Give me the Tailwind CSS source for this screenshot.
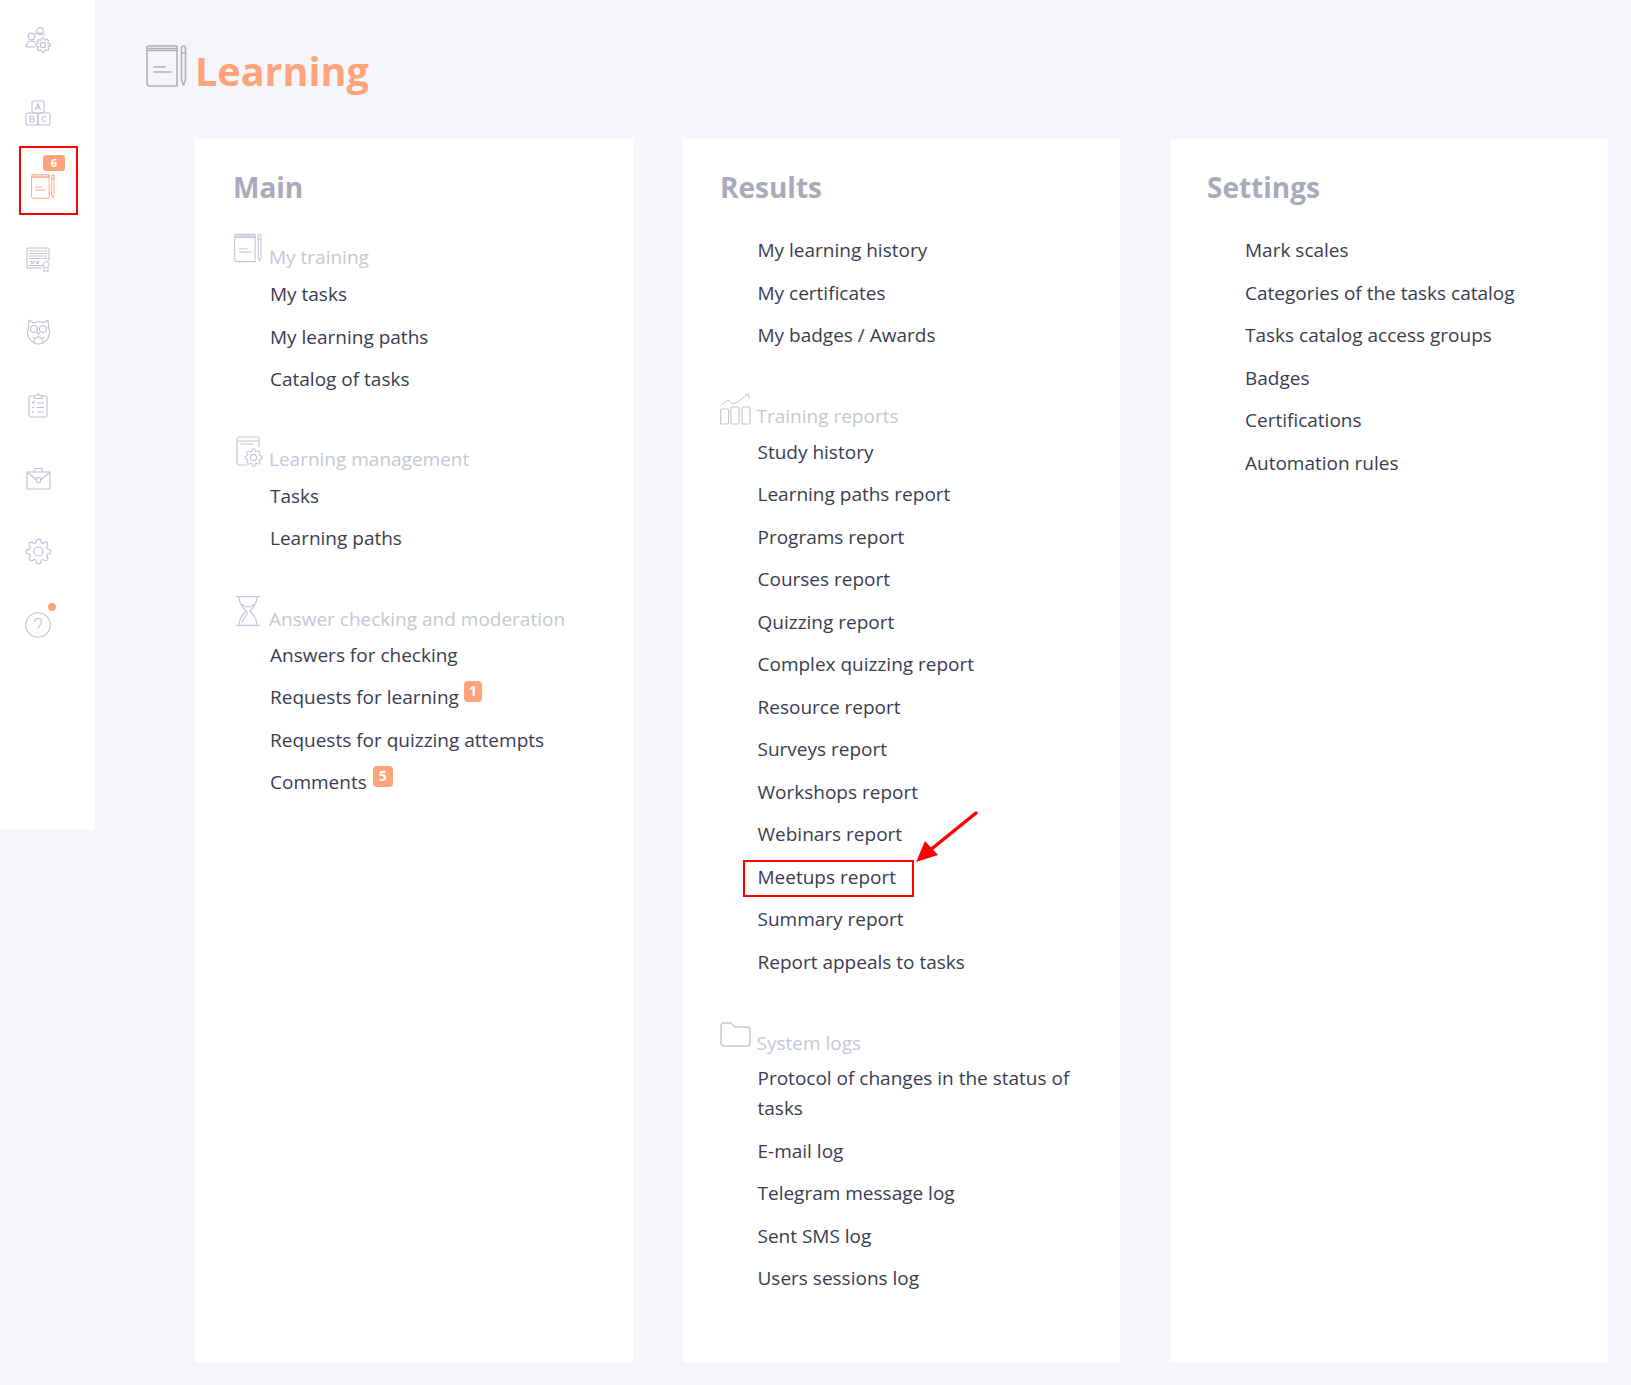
<!DOCTYPE html>
<html lang="en"><head><meta charset="utf-8"><title>Learning</title>
<script src="https://cdn.jsdelivr.net/npm/@tailwindcss/browser@4"></script></head>
<body class="bg-[#f5f6fb]">
<svg class="hidden" width="0" height="0">
<symbol id="book" viewBox="0 0 41 42"><g fill="none" stroke="currentColor" stroke-width="1.6" stroke-linecap="round" stroke-linejoin="round"><path d="M3 1h28v40H4a3 3 0 0 1-3-3V3a2 2 0 0 1 2-2z"/><path d="M1.500 5.500h29.500M3 3.500h28M8 22h11M8 27h17"/><path d="M35.500 3a2 2 0 0 1 4 0v32l-2 5-2-5zM35.500 8h4"/></g></symbol>
<symbol id="gear" viewBox="0 0 24 24"><g fill="none" stroke="currentColor" stroke-width="1.100"><circle cx="12" cy="12" r="4" vector-effect="non-scaling-stroke"/><path vector-effect="non-scaling-stroke" d="M19.400 15a1.650 1.650 0 0 0 .33 1.820l.06.06a2 2 0 0 1 0 2.830 2 2 0 0 1-2.830 0l-.06-.06a1.650 1.650 0 0 0-1.820-.33 1.650 1.650 0 0 0-1 1.510V21a2 2 0 0 1-2 2 2 2 0 0 1-2-2v-.09A1.650 1.650 0 0 0 9 19.400a1.650 1.650 0 0 0-1.820.33l-.06.06a2 2 0 0 1-2.830 0 2 2 0 0 1 0-2.830l.06-.06a1.650 1.650 0 0 0 .33-1.820 1.650 1.650 0 0 0-1.510-1H3a2 2 0 0 1-2-2 2 2 0 0 1 2-2h.09A1.650 1.650 0 0 0 4.600 9a1.650 1.650 0 0 0-.33-1.820l-.06-.06a2 2 0 0 1 0-2.830 2 2 0 0 1 2.830 0l.06.06a1.650 1.650 0 0 0 1.820.33H9a1.650 1.650 0 0 0 1-1.510V3a2 2 0 0 1 2-2 2 2 0 0 1 2 2v.09a1.650 1.650 0 0 0 1 1.510 1.650 1.650 0 0 0 1.820-.33l.06-.06a2 2 0 0 1 2.830 0 2 2 0 0 1 0 2.830l-.06.06a1.650 1.650 0 0 0-.33 1.820V9a1.650 1.650 0 0 0 1.510 1H21a2 2 0 0 1 2 2 2 2 0 0 1-2 2h-.09a1.650 1.650 0 0 0-1.510 1z"/></g></symbol>
</svg>
<div class="flex w-[1631px] h-[1385px] overflow-hidden font-['Open_Sans',sans-serif]">
<aside class="w-[95px] h-[830px] bg-white shrink-0 pt-[3px]">
  <div class="w-[76px] flex flex-col items-center text-[#bfc0d4]">
    <div class="h-[73.2px] flex items-center justify-center">
      <svg class="w-[26px] h-[26px]" viewBox="0 0 26 26" fill="none" stroke="currentColor" stroke-width="1.200"><circle cx="15" cy="4" r="3.300"/><circle cx="6.500" cy="9.500" r="3.300"/><path d="M1 20c0-3.500 2.500-6 5.500-6 1.500 0 3 .6 4 1.500M10 7c1-.5 2-1 5-1 2 0 4 1 5 2.500M1 20h9"/><use href="#gear" x="10" y="10" width="16" height="16"/></svg>
    </div>
    <div class="h-[73.2px] flex items-center justify-center">
      <svg class="w-[26px] h-[26px]" viewBox="0 0 26 26" fill="none" stroke="currentColor" stroke-width="1.100"><rect x="7" y="1" width="12" height="12" rx="2"/><rect x="1" y="13" width="12" height="12" rx="2"/><rect x="13" y="13" width="12" height="12" rx="2"/><path d="M10.500 10l2.500-6 2.500 6M11.500 8h3M5 16h2.500a1.500 1.500 0 0 1 0 3H5zm0 3h3a1.500 1.500 0 0 1 0 3H5zM21 17a2.500 2.500 0 1 0 0 4"/></svg>
    </div>
    <div class="relative h-[73.2px] w-full flex items-center justify-center">
      <svg class="w-[24px] h-[25px] text-[#ffa47a] ml-[9px] mt-[2px]"><use href="#book"/></svg>
      <div class="absolute left-[19px] top-[-3px] w-[59px] h-[69px] border-[2px] border-[#ff0000]"><span class="absolute left-[22px] top-[7px] w-[22px] h-[16px] rounded-[3px] bg-[#ffa47a] text-white text-[11px] leading-[16px] font-bold text-center">6</span></div>
    </div>
    <div class="h-[73.2px] flex items-center justify-center">
      <svg class="w-[25px] h-[25px]" viewBox="0 0 25 25" fill="none" stroke="currentColor" stroke-width="1"><path d="M16 21H1V1h22v13"/><path d="M3 4h18M3 6.500h18M3 9h18M3 11.500h18" stroke-width=".9"/><path d="M5 14l1.500 1.200 1.500-1.200-.5 2.500h-2zM10 14l1.500 1.200 1.500-1.200-.5 2.500h-2zM3 18.500h14"/><circle cx="20" cy="17.500" r="3"/><path d="M18 20.500V25l2-1.500 2 1.500v-4.500"/></svg>
    </div>
    <div class="h-[73.2px] flex items-center justify-center">
      <svg class="w-[25px] h-[26px]" viewBox="0 0 25 26" fill="none" stroke="currentColor" stroke-width="1.100"><path d="M3 1l4.500 3a11 11 0 0 1 10 0L22 1l.5 8c2 4 1 9-2 12-2 2.500-5 4-8 4s-6-1.500-8-4C1.500 18 .5 13 2.500 9z"/><circle cx="8" cy="10" r="3.500"/><circle cx="17" cy="10" r="3.500"/><path d="M11 13l1.500 2.500L14 13M7 18l2 2 3.500-2.500 3.500 2.500 2-2M8 24v-3M17 24v-3"/></svg>
    </div>
    <div class="h-[73.2px] flex items-center justify-center">
      <svg class="w-[20px] h-[25px]" viewBox="0 0 20 25" fill="none" stroke="currentColor" stroke-width="1.100"><path d="M6 3H2.500A1.500 1.500 0 0 0 1 4.500v18A1.500 1.500 0 0 0 2.500 24h15a1.500 1.500 0 0 0 1.500-1.500v-18A1.500 1.500 0 0 0 17.500 3H14"/><path d="M6 5.500V3l2-.5L10 1l2 1.500 2 .5v2.500zM4 9l1 1 2-2M9 10h7M9 14.500h7M9 19h7M4 14.500h2M4 19h2"/></svg>
    </div>
    <div class="h-[73.2px] flex items-center justify-center">
      <svg class="w-[25px] h-[23px]" viewBox="0 0 25 23" fill="none" stroke="currentColor" stroke-width="1.100"><path d="M1 5h23v17H1zM9 5V1.500h7V5"/><path d="M1 5l9.500 8M24 5l-9.500 8"/><rect x="10.500" y="10.500" width="4" height="5" rx="1"/></svg>
    </div>
    <div class="h-[73.2px] flex items-center justify-center">
      <svg class="w-[27px] h-[27px]"><use href="#gear"/></svg>
    </div>
    <div class="relative h-[73.2px] flex items-center justify-center">
      <svg class="w-[26px] h-[26px]" viewBox="0 0 26 26" fill="none" stroke="currentColor" stroke-width="1.100"><circle cx="13" cy="13" r="12.300"/><path d="M10 10c0-2 1.300-3.500 3.200-3.500S16.500 8 16.500 10c0 2.500-3.200 3.500-3.200 6.500M13.300 19.500v1"/></svg>
      <span class="absolute left-[23px] top-[14px] w-[8px] h-[8px] rounded-full bg-[#ffa47a]"></span>
    </div>
  </div>
</aside>
<main class="relative flex-1">
  <header class="h-[139px] pt-[45px] pl-[51px] flex items-start">
    <svg class="w-[41px] h-[42px] text-[#b1b2b8] shrink-0"><use href="#book"/></svg>
    <h1 class="ml-[8px] mt-[-4px] text-[39.500px] leading-[60px] font-bold text-[#ffa47a]">Learning</h1>
  </header>
  <div class="ml-[100px] flex gap-[50px] text-[19px] leading-[30px] text-[#3a3d50]">
    <section class="w-[438px] h-[1223px] bg-white pl-[38px] pt-[27px]">
      <h2 class="text-[28px] leading-[42px] font-bold text-[#a9aabb]">Main</h2>
      <div class="mt-[18px] mb-[33px] pl-[1px]">
        <div class="flex items-end h-[46px] text-[#c5c6d8]"><svg class="w-[28px] h-[30px] mb-[9px] mr-[7px]"><use href="#book"/></svg><span>My training</span></div>
        <a class="block pl-[36px] py-[6.250px] mt-[1px]">My tasks</a>
        <a class="block pl-[36px] py-[6.250px]">My learning paths</a>
        <a class="block pl-[36px] py-[6.250px]">Catalog of tasks</a>
      </div>
      <div class="mb-[34px] pl-[1px]">
        <div class="flex items-end h-[40px] text-[#c5c6d8]"><svg class="w-[27px] h-[31px] mb-[7px] mr-[6px] ml-[2px]" viewBox="0 0 27 31" fill="none" stroke="currentColor" stroke-width="1.200"><path d="M11 29H3a2 2 0 0 1-2-2V3a2 2 0 0 1 2-2h19a1 1 0 0 1 1 1v9M1 5h22M4 8h13"/><use href="#gear" x="8" y="12" width="19" height="19"/></svg><span>Learning management</span></div>
        <a class="block pl-[36px] py-[6.250px] mt-[1px]">Tasks</a>
        <a class="block pl-[36px] py-[6.250px]">Learning paths</a>
      </div>
      <div class="pl-[1px]">
        <div class="flex items-end h-[40px] text-[#c5c6d8]"><svg class="w-[24px] h-[30px] mb-[8px] mr-[9px] ml-[2px]" viewBox="0 0 24 30" fill="none" stroke="currentColor" stroke-width="1.200"><path d="M0 .6h24M0 29.400h24M3 1c0 6 3 10 7 14-4 4-7 8-7 14M21 1c0 6-3 10-7 14 4 4 7 8 7 14M6 8c3 4 9 4 12 0M6 27c1-5 5-7 6-12"/></svg><span>Answer checking and moderation</span></div>
        <a class="block pl-[36px] py-[6.250px]">Answers for checking</a>
        <a class="flex items-start pl-[36px] py-[6.250px]">Requests for learning<span class="ml-[5px] mt-[-1px] w-[18px] h-[21px] rounded-[4px] bg-[#ffa47a] text-white text-[14px] leading-[19px] font-bold text-center">1</span></a>
        <a class="block pl-[36px] py-[6.250px]">Requests for quizzing attempts</a>
        <a class="flex items-start pl-[36px] py-[6.250px]">Comments<span class="ml-[6px] mt-[-1px] w-[20px] h-[21px] rounded-[4px] bg-[#ffa47a] text-white text-[14px] leading-[19px] font-bold text-center">5</span></a>
      </div>
    </section>
    <section class="w-[437px] h-[1223px] bg-white pl-[37px] pt-[27px]">
      <h2 class="text-[28px] leading-[42px] font-bold text-[#a9aabb]">Results</h2>
      <div class="mt-[21px] mb-[29px] pl-[0.500px]">
        <a class="block pl-[37px] py-[6.250px]">My learning history</a>
        <a class="block pl-[37px] py-[6.250px]">My certificates</a>
        <a class="block pl-[37px] py-[6.250px]">My badges / Awards</a>
      </div>
      <div class="mb-[35px] pl-[0.500px]">
        <div class="flex items-end h-[45px] text-[#c5c6d8]"><svg class="w-[31px] h-[31px] mb-[6px] mr-[6px] ml-[-1px]" viewBox="0 0 31 31" fill="none" stroke="currentColor" stroke-width="1.200"><rect x=".6" y="15" width="8" height="15" rx="1"/><rect x="11" y="13" width="8" height="17" rx="1"/><rect x="22" y="13" width="8" height="17" rx="1"/><path d="M1 11l7-5 5 4 6-3 9-7M25 .6h4v4" stroke-width="1"/></svg><span>Training reports</span></div>
        <a class="block pl-[37px] py-[6.250px]">Study history</a>
        <a class="block pl-[37px] py-[6.250px]">Learning paths report</a>
        <a class="block pl-[37px] py-[6.250px]">Programs report</a>
        <a class="block pl-[37px] py-[6.250px]">Courses report</a>
        <a class="block pl-[37px] py-[6.250px]">Quizzing report</a>
        <a class="block pl-[37px] py-[6.250px]">Complex quizzing report</a>
        <a class="block pl-[37px] py-[6.250px]">Resource report</a>
        <a class="block pl-[37px] py-[6.250px]">Surveys report</a>
        <a class="block pl-[37px] py-[6.250px]">Workshops report</a>
        <a class="block pl-[37px] py-[6.250px]">Webinars report</a>
        <a class="relative block pl-[37px] py-[6.250px]">Meetups report<span class="absolute left-[22px] top-[4px] w-[171px] h-[37px] border-2 border-[#ff0000]"></span></a>
        <a class="block pl-[37px] py-[6.250px]">Summary report</a>
        <a class="block pl-[37px] py-[6.250px]">Report appeals to tasks</a>
      </div>
      <div class="pl-[0.500px]">
        <div class="flex items-end h-[40px] text-[#c5c6d8]"><svg class="w-[31px] h-[25px] mb-[11px] mr-[6px] ml-[-1px]" viewBox="0 0 31 25" fill="none" stroke="currentColor" stroke-width="1.500"><path d="M1 4a3 3 0 0 1 3-3h7l4 4h12a3 3 0 0 1 3 3v13a3 3 0 0 1-3 3H4a3 3 0 0 1-3-3z"/></svg><span>System logs</span></div>
        <a class="block pl-[37px] pr-[40px] py-[6.250px] mt-[-1px]">Protocol of changes in the status of tasks</a>
        <a class="block pl-[37px] py-[6.250px]">E-mail log</a>
        <a class="block pl-[37px] py-[6.250px]">Telegram message log</a>
        <a class="block pl-[37px] py-[6.250px]">Sent SMS log</a>
        <a class="block pl-[37px] py-[6.250px]">Users sessions log</a>
      </div>
    </section>
    <section class="w-[438px] h-[1223px] bg-white pl-[37px] pt-[27px]">
      <h2 class="text-[28px] leading-[42px] font-bold text-[#a9aabb]">Settings</h2>
      <div class="mt-[21px]">
        <a class="block pl-[38px] py-[6.250px]">Mark scales</a>
        <a class="block pl-[38px] py-[6.250px]">Categories of the tasks catalog</a>
        <a class="block pl-[38px] py-[6.250px]">Tasks catalog access groups</a>
        <a class="block pl-[38px] py-[6.250px]">Badges</a>
        <a class="block pl-[38px] py-[6.250px]">Certifications</a>
        <a class="block pl-[38px] py-[6.250px]">Automation rules</a>
      </div>
    </section>
  </div>
  <svg class="absolute left-[819px] top-[810px] w-[65px] h-[55px]" viewBox="0 0 65 55" fill="none"><path d="M62 3L15 41" stroke="#ff0000" stroke-width="3.500" stroke-linecap="round"/><path d="M2 52L11 31 24 45z" fill="#ff0000"/></svg>
</main>
</div>
</body></html>
